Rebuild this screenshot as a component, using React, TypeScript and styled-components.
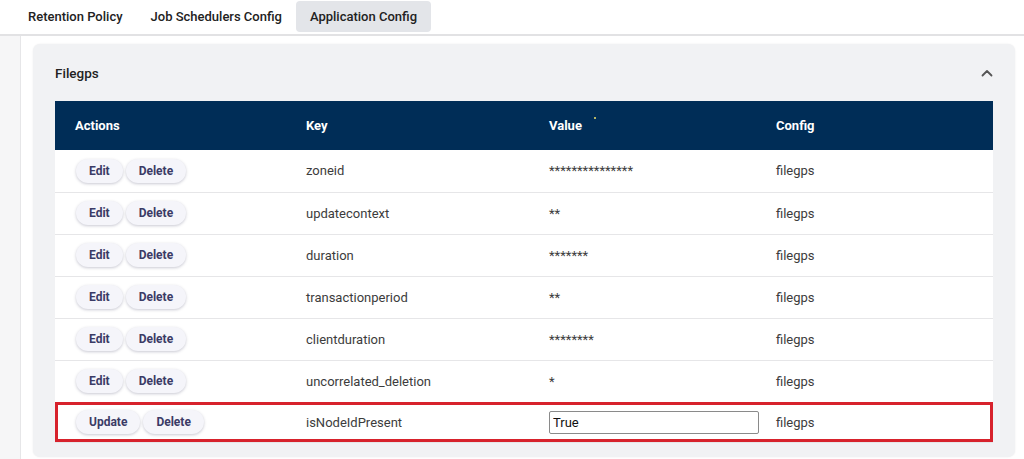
import React from "react";
import styled, {createGlobalStyle, css} from "styled-components";

const GlobalStyle = createGlobalStyle`
  html, body {
    margin: 0;
    padding: 0;
    background: #f6f6f7;
    font-family: Roboto, "Liberation Sans", Arial, sans-serif;
    color: #333;
  }
`;

type Row = { key: string, value: string, config: string, editing?: boolean };

const rows: Row[] = [
    {key: "zoneid", value: "***************", config: "filegps"},
    {key: "updatecontext", value: "**", config: "filegps"},
    {key: "duration", value: "*******", config: "filegps"},
    {key: "transactionperiod", value: "**", config: "filegps"},
    {key: "clientduration", value: "********", config: "filegps"},
    {key: "uncorrelated_deletion", value: "*", config: "filegps"},
    {key: "isNodeIdPresent", value: "True", config: "filegps", editing: true},
];

const tabs = ["Retention Policy", "Job Schedulers Config", "Application Config"];

const ChevronUp = () => (
    <svg width="12" height="8" viewBox="0 0 12 8" fill="none">
        <path d="M1.5 6.5 L6 2 L10.5 6.5" stroke="#555" strokeWidth="1.8" strokeLinecap="round"
              strokeLinejoin="round"/>
    </svg>
);

export default function App() {
    return (
        <>
            <GlobalStyle/>
            <Page>
                <TabBar>
                    {tabs.map((t, i) => (
                        <Tab key={t} active={i === tabs.length - 1}>{t}</Tab>
                    ))}
                </TabBar>
                <Content>
                    <Card>
                        <CardHeader>
                            <CardTitle>Filegps</CardTitle>
                            <ChevronUp/>
                        </CardHeader>
                        <Table>
                            <colgroup>
                                <col style={{width: 231}}/>
                                <col style={{width: 243}}/>
                                <col style={{width: 227}}/>
                                <col style={{width: 237}}/>
                            </colgroup>
                            <thead>
                            <tr>
                                <Th>Actions</Th>
                                <Th>Key</Th>
                                <Th>Value<Dot/></Th>
                                <Th>Config</Th>
                            </tr>
                            </thead>
                            <tbody>
                            {rows.map(r => (
                                <Tr key={r.key} highlighted={!!r.editing}>
                                    <Td>
                                        <Actions>
                                            <PillButton>{r.editing ? "Update" : "Edit"}</PillButton>
                                            <PillButton>Delete</PillButton>
                                        </Actions>
                                    </Td>
                                    <Td>{r.key}</Td>
                                    <Td>
                                        {r.editing
                                            ? <ValueInput defaultValue={r.value}/>
                                            : r.value}
                                    </Td>
                                    <Td>{r.config}</Td>
                                </Tr>
                            ))}
                            </tbody>
                        </Table>
                    </Card>
                </Content>
            </Page>
        </>
    );
}

const Page = styled.div`
  width: 1024px;
  height: 459px;
  overflow: hidden;
  display: flex;
  flex-direction: column;
`;

const TabBar = styled.div`
  display: flex;
  align-items: flex-start;
  height: 33px;
  padding: 1px 0 0 14px;
  background: #fff;
  border-bottom: 2px solid #e2e2e4;
  flex-shrink: 0;
`;

const Tab = styled.div<{ active?: boolean }>`
  height: 31px;
  display: flex;
  align-items: center;
  padding: 0 14px;
  font-size: 13px;
  font-weight: 500;
  color: #222;
  border-radius: 4px;
  white-space: nowrap;

  ${({active}) => active && css`
    background: #e3e5e9;
  `}
`;

const Content = styled.div`
  flex: 1;
  margin-left: 20px;
  padding: 8px 9px 0 12px;
  background: #fff;
  border-left: 1px solid #e6e6e8;
`;

const Card = styled.div`
  background: #f1f2f4;
  border-radius: 7px;
  box-shadow: 0 0 2px rgba(0, 0, 0, 0.08);
  padding: 0 22px 14px;
`;

const CardHeader = styled.div`
  height: 57px;
  display: flex;
  align-items: center;
  justify-content: space-between;
`;

const CardTitle = styled.span`
  font-size: 13.5px;
  font-weight: 500;
  color: #222;
`;

const Table = styled.table`
  width: 100%;
  border-collapse: collapse;
  table-layout: fixed;
  background: #fff;
`;

const Th = styled.th`
  position: relative;
  height: 49px;
  padding: 0 20px;
  background: #002d57;
  color: #fff;
  text-align: left;
  font-size: 13px;
  font-weight: 700;
`;

const Dot = styled.span`
  position: absolute;
  left: 65px;
  top: 16px;
  width: 2px;
  height: 2px;
  border-radius: 50%;
  background: #f2e36b;
`;

const Tr = styled.tr<{ highlighted?: boolean }>`
  height: 42px;
  border-bottom: 1px solid #e6e6e8;

  ${({highlighted}) => highlighted && css`
    height: 40px;
    outline: 3px solid #d7222c;
    outline-offset: -3px;
  `}
`;

const Td = styled.td`
  padding: 0 20px;
  font-size: 13px;
  color: #3c3c3c;
  white-space: nowrap;
`;

const Actions = styled.div`
  display: flex;
  gap: 3px;
  margin-left: 1px;
`;

const PillButton = styled.button`
  height: 24px;
  padding: 0 13px;
  border: none;
  border-radius: 12px;
  background: #f5f5fa;
  box-shadow: 0 1px 3px rgba(40, 40, 80, 0.25);
  color: #3b3b66;
  font-family: Roboto, "Liberation Sans", Arial, sans-serif;
  font-size: 12px;
  font-weight: 700;
  cursor: pointer;
`;

const ValueInput = styled.input`
  width: 210px;
  height: 23px;
  box-sizing: border-box;
  padding: 0 3px;
  border: 1px solid #8a8a8a;
  border-radius: 2px;
  font-family: Roboto, "Liberation Sans", Arial, sans-serif;
  font-size: 13px;
  color: #111;
`;
